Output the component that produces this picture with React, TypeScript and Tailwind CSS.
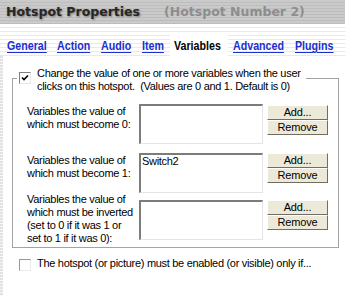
import React from "react";

const Btn = ({ label }: { label: string }) => (
  <div className="h-[15px] w-[61px] flex items-center justify-center bg-[#ece9d8] border border-t-white border-l-white border-b-[#6f6d64] border-r-[#6f6d64] text-[11px] leading-none tracking-[-0.2px] text-black">
    {label}
  </div>
);

const Box = ({ text }: { text?: string }) => (
  <div className="w-[124px] h-[40px] bg-white border-t-2 border-l-2 border-b border-r border-t-[#7c7c7c] border-l-[#7c7c7c] border-b-[#e4e4e4] border-r-[#e4e4e4] px-[1px] text-[11px] leading-[13px] text-black">
    {text}
  </div>
);

const Check = ({ checked }: { checked?: boolean }) => (
  <div className={"w-[12px] h-[12px] shrink-0 bg-white border border-t-[#7d7d7d] border-l-[#7d7d7d] border-b-[#e6e6e6] border-r-[#e6e6e6] flex items-center justify-center " + (checked ? "" : "opacity-80")}>
    {checked && (
      <svg width="8" height="8" viewBox="0 0 8 8">
        <path d="M1 3.5 L3 5.5 L7 1.5" stroke="#000" strokeWidth="1.6" fill="none" />
      </svg>
    )}
  </div>
);

const Tab = ({ label, w }: { label: string; w: string }) => (
  <div className={"h-[21px] flex items-center pt-[1px] " + w}>
    <span className="inline-block origin-left scale-x-[0.82] font-bold text-[13px] text-[#1a2fcf] underline underline-offset-[2px] whitespace-nowrap">
      {label}
    </span>
  </div>
);

export default function App() {
  return (
    <div className="relative w-[355px] h-[296px] overflow-hidden bg-white font-['Liberation_Sans',Arial,sans-serif] text-black">
      {/* header */}
      <div className="h-[24px] w-[345px] flex items-center pl-[6px] bg-[repeating-linear-gradient(to_bottom,#cacaca_0px,#cacaca_2px,#bdbdbd_2px,#bdbdbd_3px)] font-['DejaVu_Sans',Verdana,sans-serif] font-bold text-[12.5px] leading-none">
        <span className="text-[#262626] [text-shadow:1px_1px_2px_#7a7a7a]">Hotspot Properties</span>
        <span className="ml-[24px] text-[#8d8d8d]">(Hotspot Number 2)</span>
      </div>
      {/* striped band + tabs */}
      <div className="w-[345px] h-[32px] bg-[repeating-linear-gradient(to_bottom,#ffffff_0px,#ffffff_3px,#e9e9e9_3px,#e9e9e9_4px)] flex items-end">
        <div className="flex items-end h-[21px] pl-[7px]">
          <Tab label="General" w="w-[50px]" />
          <Tab label="Action" w="w-[44px]" />
          <Tab label="Audio" w="w-[41px]" />
          <Tab label="Item" w="w-[28px]" />
          <div className="h-[21px] w-[58px] pl-[4px] bg-white flex items-center pt-[1px]">
            <span className="inline-block origin-left scale-x-[0.82] font-bold text-[13px] text-black whitespace-nowrap">Variables</span>
          </div>
          <div className="w-[5px]" />
          <Tab label="Advanced" w="w-[62px]" />
          <Tab label="Plugins" w="w-[45px]" />
        </div>
      </div>
      {/* content */}
      <div className="flex h-[240px]">
        <div className="w-[3px] bg-[repeating-linear-gradient(to_bottom,#e2e2e2_0px,#e2e2e2_2px,#f6f6f6_2px,#f6f6f6_3px)]" />
        <div className="flex-1 pl-[9px] pt-[22px] text-[11px] leading-[13px] tracking-[-0.3px] whitespace-nowrap">
          <div className="w-[327px] border border-[#a3a3a3] pb-[2px]">
            <div className="-mt-[12px] ml-[4px] w-fit bg-white pl-[2px] pr-[5px] flex items-start gap-[6px]">
              <div className="mt-[5px]">
                <Check checked />
              </div>
              <div>
                Change the value of one or more variables when the user
                <br />
                clicks on this hotspot.&nbsp; (Values are 0 and 1. Default is 0)
              </div>
            </div>
            <div className="flex items-start mt-[11px] ml-[14px]">
              <div className="w-[112px] pt-[1px]">
                Variables the value of
                <br />
                which must become 0:
              </div>
              <Box />
              <div className="ml-[4px] mt-[1px] flex flex-col">
                <Btn label="Add..." />
                <Btn label="Remove" />
              </div>
            </div>
            <div className="flex items-start mt-[9px] ml-[14px]">
              <div className="w-[112px] pt-[1px]">
                Variables the value of
                <br />
                which must become 1:
              </div>
              <Box text="Switch2" />
              <div className="ml-[4px] flex flex-col">
                <Btn label="Add..." />
                <Btn label="Remove" />
              </div>
            </div>
            <div className="flex items-start mt-0 ml-[14px]">
              <div className="w-[112px]">
                Variables the value of
                <br />
                which must be inverted
                <br />
                (set to 0 if it was 1 or
                <br />
                set to 1 if it was 0):
              </div>
              <div className="mt-[7px]">
                <Box />
              </div>
              <div className="ml-[4px] mt-[7px] flex flex-col">
                <Btn label="Add..." />
                <Btn label="Remove" />
              </div>
            </div>
          </div>
          <div className="mt-[9px] ml-[7px] flex items-start gap-[6px]">
            <div className="mt-[2px]">
              <Check />
            </div>
            <div>The hotspot (or picture) must be enabled (or visible) only if...</div>
          </div>
        </div>
      </div>
    </div>
  );
}
